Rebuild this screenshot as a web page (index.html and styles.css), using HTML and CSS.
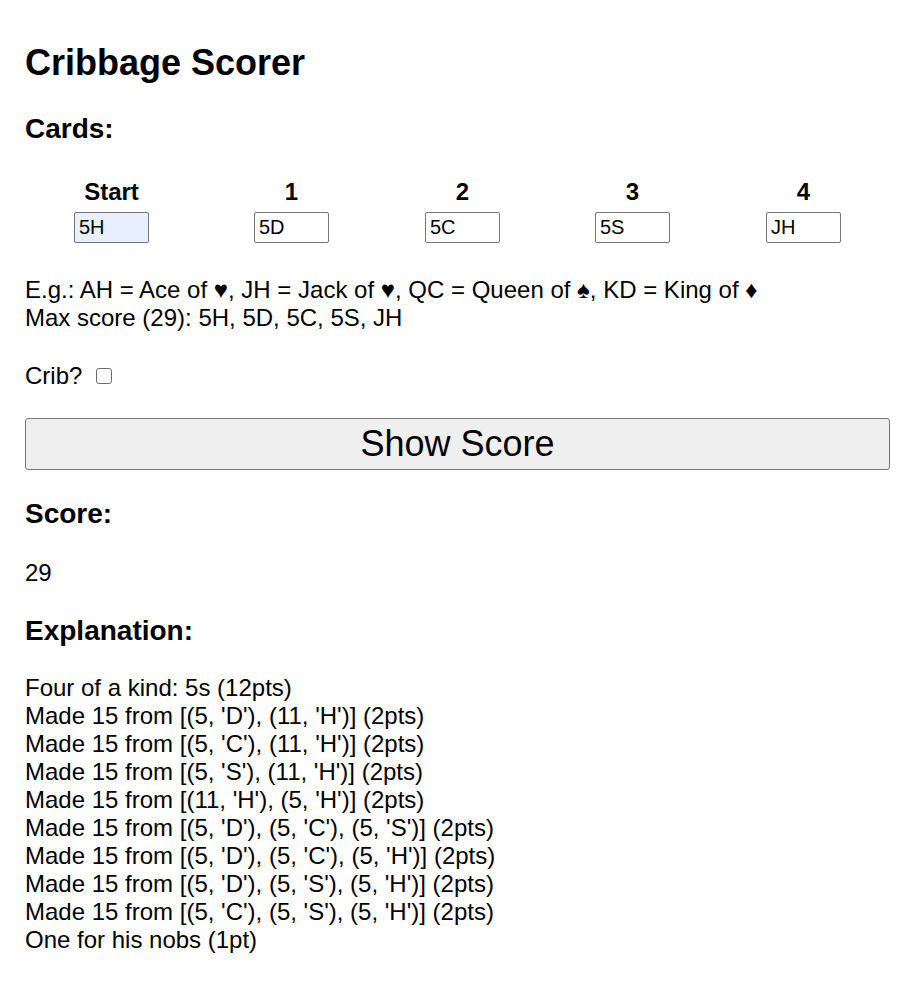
FILE: index.html
```html
<!DOCTYPE html>
<html>
<head>
<meta charset="utf-8">
<title>Cribbage Scorer</title>
<link rel="stylesheet" href="styles.css">
</head>
<body>
<h2 class="title">Cribbage Scorer</h2>
<h3 class="section">Cards:</h3>
<div class="cards">
  <div class="card"><span class="card-label">Start</span><input class="card-input autofill" type="text" value="5H"></div>
  <div class="card"><span class="card-label">1</span><input class="card-input" type="text" value="5D"></div>
  <div class="card"><span class="card-label">2</span><input class="card-input" type="text" value="5C"></div>
  <div class="card"><span class="card-label">3</span><input class="card-input" type="text" value="5S"></div>
  <div class="card"><span class="card-label">4</span><input class="card-input" type="text" value="JH"></div>
</div>
<p class="hint">E.g.: AH = Ace of ♥, JH = Jack of ♥, QC = Queen of ♠, KD = King of ♦<br>Max score (29): 5H, 5D, 5C, 5S, JH</p>
<p class="crib"><span>Crib?</span><input class="crib-box" type="checkbox"></p>
<button class="show-btn" type="button">Show Score</button>
<h3 class="section">Score:</h3>
<p class="text score-value">29</p>
<h3 class="section explain-head">Explanation:</h3>
<p class="text explain">Four of a kind: 5s (12pts)<br>Made 15 from [(5, 'D'), (11, 'H')] (2pts)<br>Made 15 from [(5, 'C'), (11, 'H')] (2pts)<br>Made 15 from [(5, 'S'), (11, 'H')] (2pts)<br>Made 15 from [(11, 'H'), (5, 'H')] (2pts)<br>Made 15 from [(5, 'D'), (5, 'C'), (5, 'S')] (2pts)<br>Made 15 from [(5, 'D'), (5, 'C'), (5, 'H')] (2pts)<br>Made 15 from [(5, 'D'), (5, 'S'), (5, 'H')] (2pts)<br>Made 15 from [(5, 'C'), (5, 'S'), (5, 'H')] (2pts)<br>One for his nobs (1pt)</p>
</body>
</html>
```
FILE: styles.css
```css
html, body {
  background: #ffffff;
}
body {
  margin: 12px 23px 12px 25px;
  font-family: "Liberation Sans", Arial, sans-serif;
  font-size: 24px;
  line-height: 28px;
  color: #000;
}
.title {
  font-size: 36px;
  line-height: 41px;
  font-weight: bold;
  margin: 30px 0 30px 0;
}
.section {
  font-size: 28px;
  line-height: 32px;
  font-weight: bold;
  margin: 28px 0;
}
.cards {
  display: grid;
  grid-template-columns: 173fr 187fr 155fr 185fr 157fr;
  padding: 0 8px 0 0;
  margin-top: 33px;
}
.card {
  display: flex;
  flex-direction: column;
  align-items: center;
  gap: 6px;
}
.card-label {
  font-weight: bold;
  line-height: 28px;
}
.card-input {
  box-sizing: border-box;
  width: 75px;
  height: 31px;
  border: 1px solid #767676;
  border-radius: 2px;
  padding: 1px 4px;
  font-family: "Liberation Sans", Arial, sans-serif;
  font-size: 20px;
  color: #000;
  background: #fff;
  margin: 0;
}
.card-input.autofill {
  background: #e8f0fe;
}
.hint {
  margin: 33px 0 0 0;
}
.crib {
  margin: 30px 0 0 0;
  display: flex;
  align-items: center;
}
.crib-box {
  appearance: none;
  -webkit-appearance: none;
  box-sizing: border-box;
  width: 16px;
  height: 16px;
  margin: 0 0 0 14px;
  border: 1px solid #6b6b6b;
  border-radius: 3px;
  background: #fff;
}
.show-btn {
  display: block;
  box-sizing: border-box;
  width: 100%;
  height: 52px;
  margin-top: 28px;
  padding: 0;
  font-family: "Liberation Sans", Arial, sans-serif;
  font-size: 36px;
  color: #000;
  background: #efefef;
  border: 1px solid #767676;
  border-radius: 3px;
}
.text {
  margin: 28px 0;
}
.score-value {
  margin-top: 29px;
}
.explain-head {
  margin-bottom: 27px;
}
.explain {
  margin-top: 27px;
}
```
